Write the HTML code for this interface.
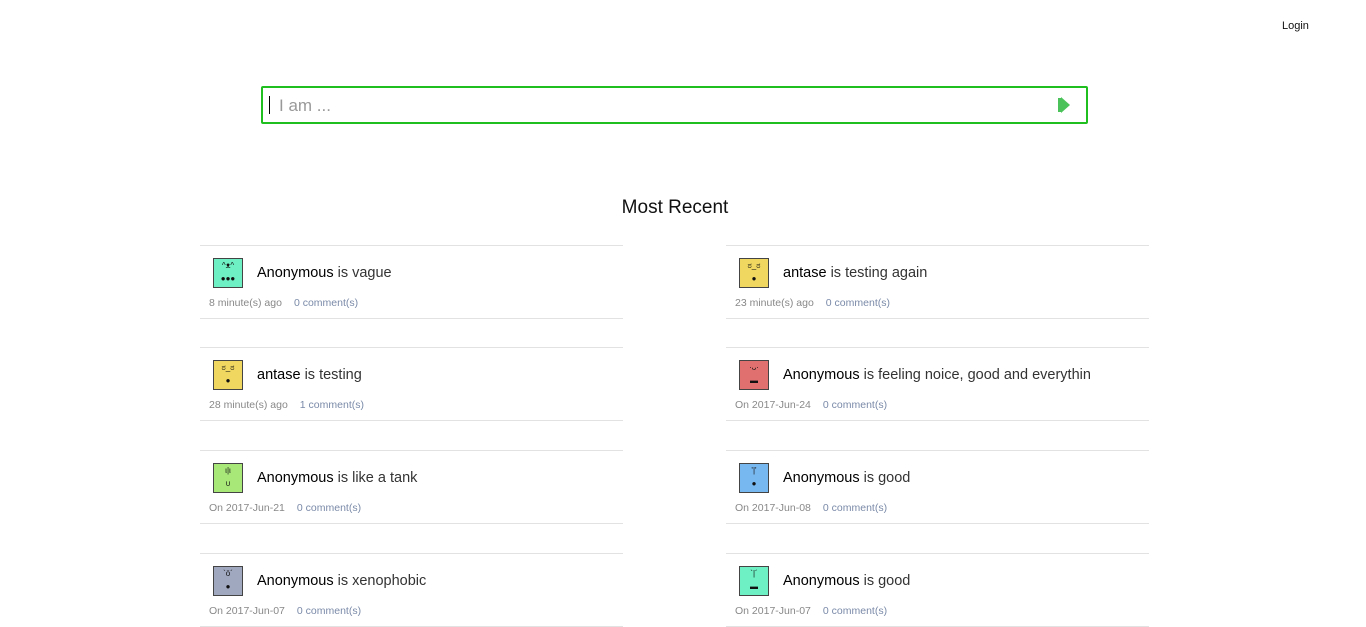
<!DOCTYPE html>
<html><head><meta charset="utf-8"><style>
body{margin:0;background:#fff;font-family:"Liberation Sans",sans-serif;width:1366px;height:627px;overflow:hidden;position:relative}
.login{position:absolute;left:1282px;top:20px;font-size:11px;color:#111}
.search{position:absolute;left:261px;top:86px;width:823px;height:34px;border:2px solid #1fbf1f;border-radius:2px}
.search .ph{position:absolute;left:16px;top:8px;font-size:17px;color:#999}
.search .cur{position:absolute;left:6px;top:8px;width:1px;height:18px;background:#000}
.search .arr{position:absolute;left:798px;top:9px;width:0;height:0;border-left:9px solid #4cc35a;border-top:8px solid transparent;border-bottom:8px solid transparent}
.search .arr2{position:absolute;left:795px;top:10px;width:4px;height:14px;background:#4cc35a}
h2{position:absolute;left:0;width:1350px;top:197px;margin:0;text-align:center;font-weight:normal;font-size:19px;color:#111}
.card{position:absolute;width:423px;height:72px;border-top:1px solid #e2e2e2;border-bottom:1px solid #e2e2e2}
.av{position:absolute;left:13px;top:12px;width:28px;height:28px;border:1px solid #444;font-size:8px;text-align:center;line-height:13px;color:#111}
.t{position:absolute;left:57px;top:19px;font-size:14.5px;color:#333}
.t b{font-weight:normal;color:#000}
.m{position:absolute;left:9px;top:51px;font-size:10.5px;color:#888}
.m span{color:#7a8aa8;margin-left:12px}
</style></head><body>
<div class="login">Login</div>
<div class="search"><div class="cur"></div><div class="ph">I am ...</div><div class="arr2"></div><div class="arr"></div></div>
<h2>Most Recent</h2>

<div class="card" style="left:200px;top:245px"><div class="av" style="background:#6ef0c4">^ᴥ^<br>●●●</div><div class="t"><b>Anonymous</b> is vague</div><div class="m">8 minute(s) ago<span>0 comment(s)</span></div></div>
<div class="card" style="left:726px;top:245px"><div class="av" style="background:#f0d860">ಠ_ಠ<br>●</div><div class="t"><b>antase</b> is testing again</div><div class="m">23 minute(s) ago<span>0 comment(s)</span></div></div>

<div class="card" style="left:200px;top:347px"><div class="av" style="background:#f0d860">ಠ_ಠ<br>●</div><div class="t"><b>antase</b> is testing</div><div class="m">28 minute(s) ago<span>1 comment(s)</span></div></div>
<div class="card" style="left:726px;top:347px"><div class="av" style="background:#e07070">·ᴗ·<br>▬</div><div class="t"><b>Anonymous</b> is feeling noice, good and everythin</div><div class="m">On 2017-Jun-24<span>0 comment(s)</span></div></div>

<div class="card" style="left:200px;top:450px"><div class="av" style="background:#a8e878">ι|ι<br>∪</div><div class="t"><b>Anonymous</b> is like a tank</div><div class="m">On 2017-Jun-21<span>0 comment(s)</span></div></div>
<div class="card" style="left:726px;top:450px"><div class="av" style="background:#78b8f0">'|'<br>●</div><div class="t"><b>Anonymous</b> is good</div><div class="m">On 2017-Jun-08<span>0 comment(s)</span></div></div>

<div class="card" style="left:200px;top:553px"><div class="av" style="background:#a0a8c0">`ö´<br>●</div><div class="t"><b>Anonymous</b> is xenophobic</div><div class="m">On 2017-Jun-07<span>0 comment(s)</span></div></div>
<div class="card" style="left:726px;top:553px"><div class="av" style="background:#6ef0c4">`|´<br>▬</div><div class="t"><b>Anonymous</b> is good</div><div class="m">On 2017-Jun-07<span>0 comment(s)</span></div></div>
</body></html>
